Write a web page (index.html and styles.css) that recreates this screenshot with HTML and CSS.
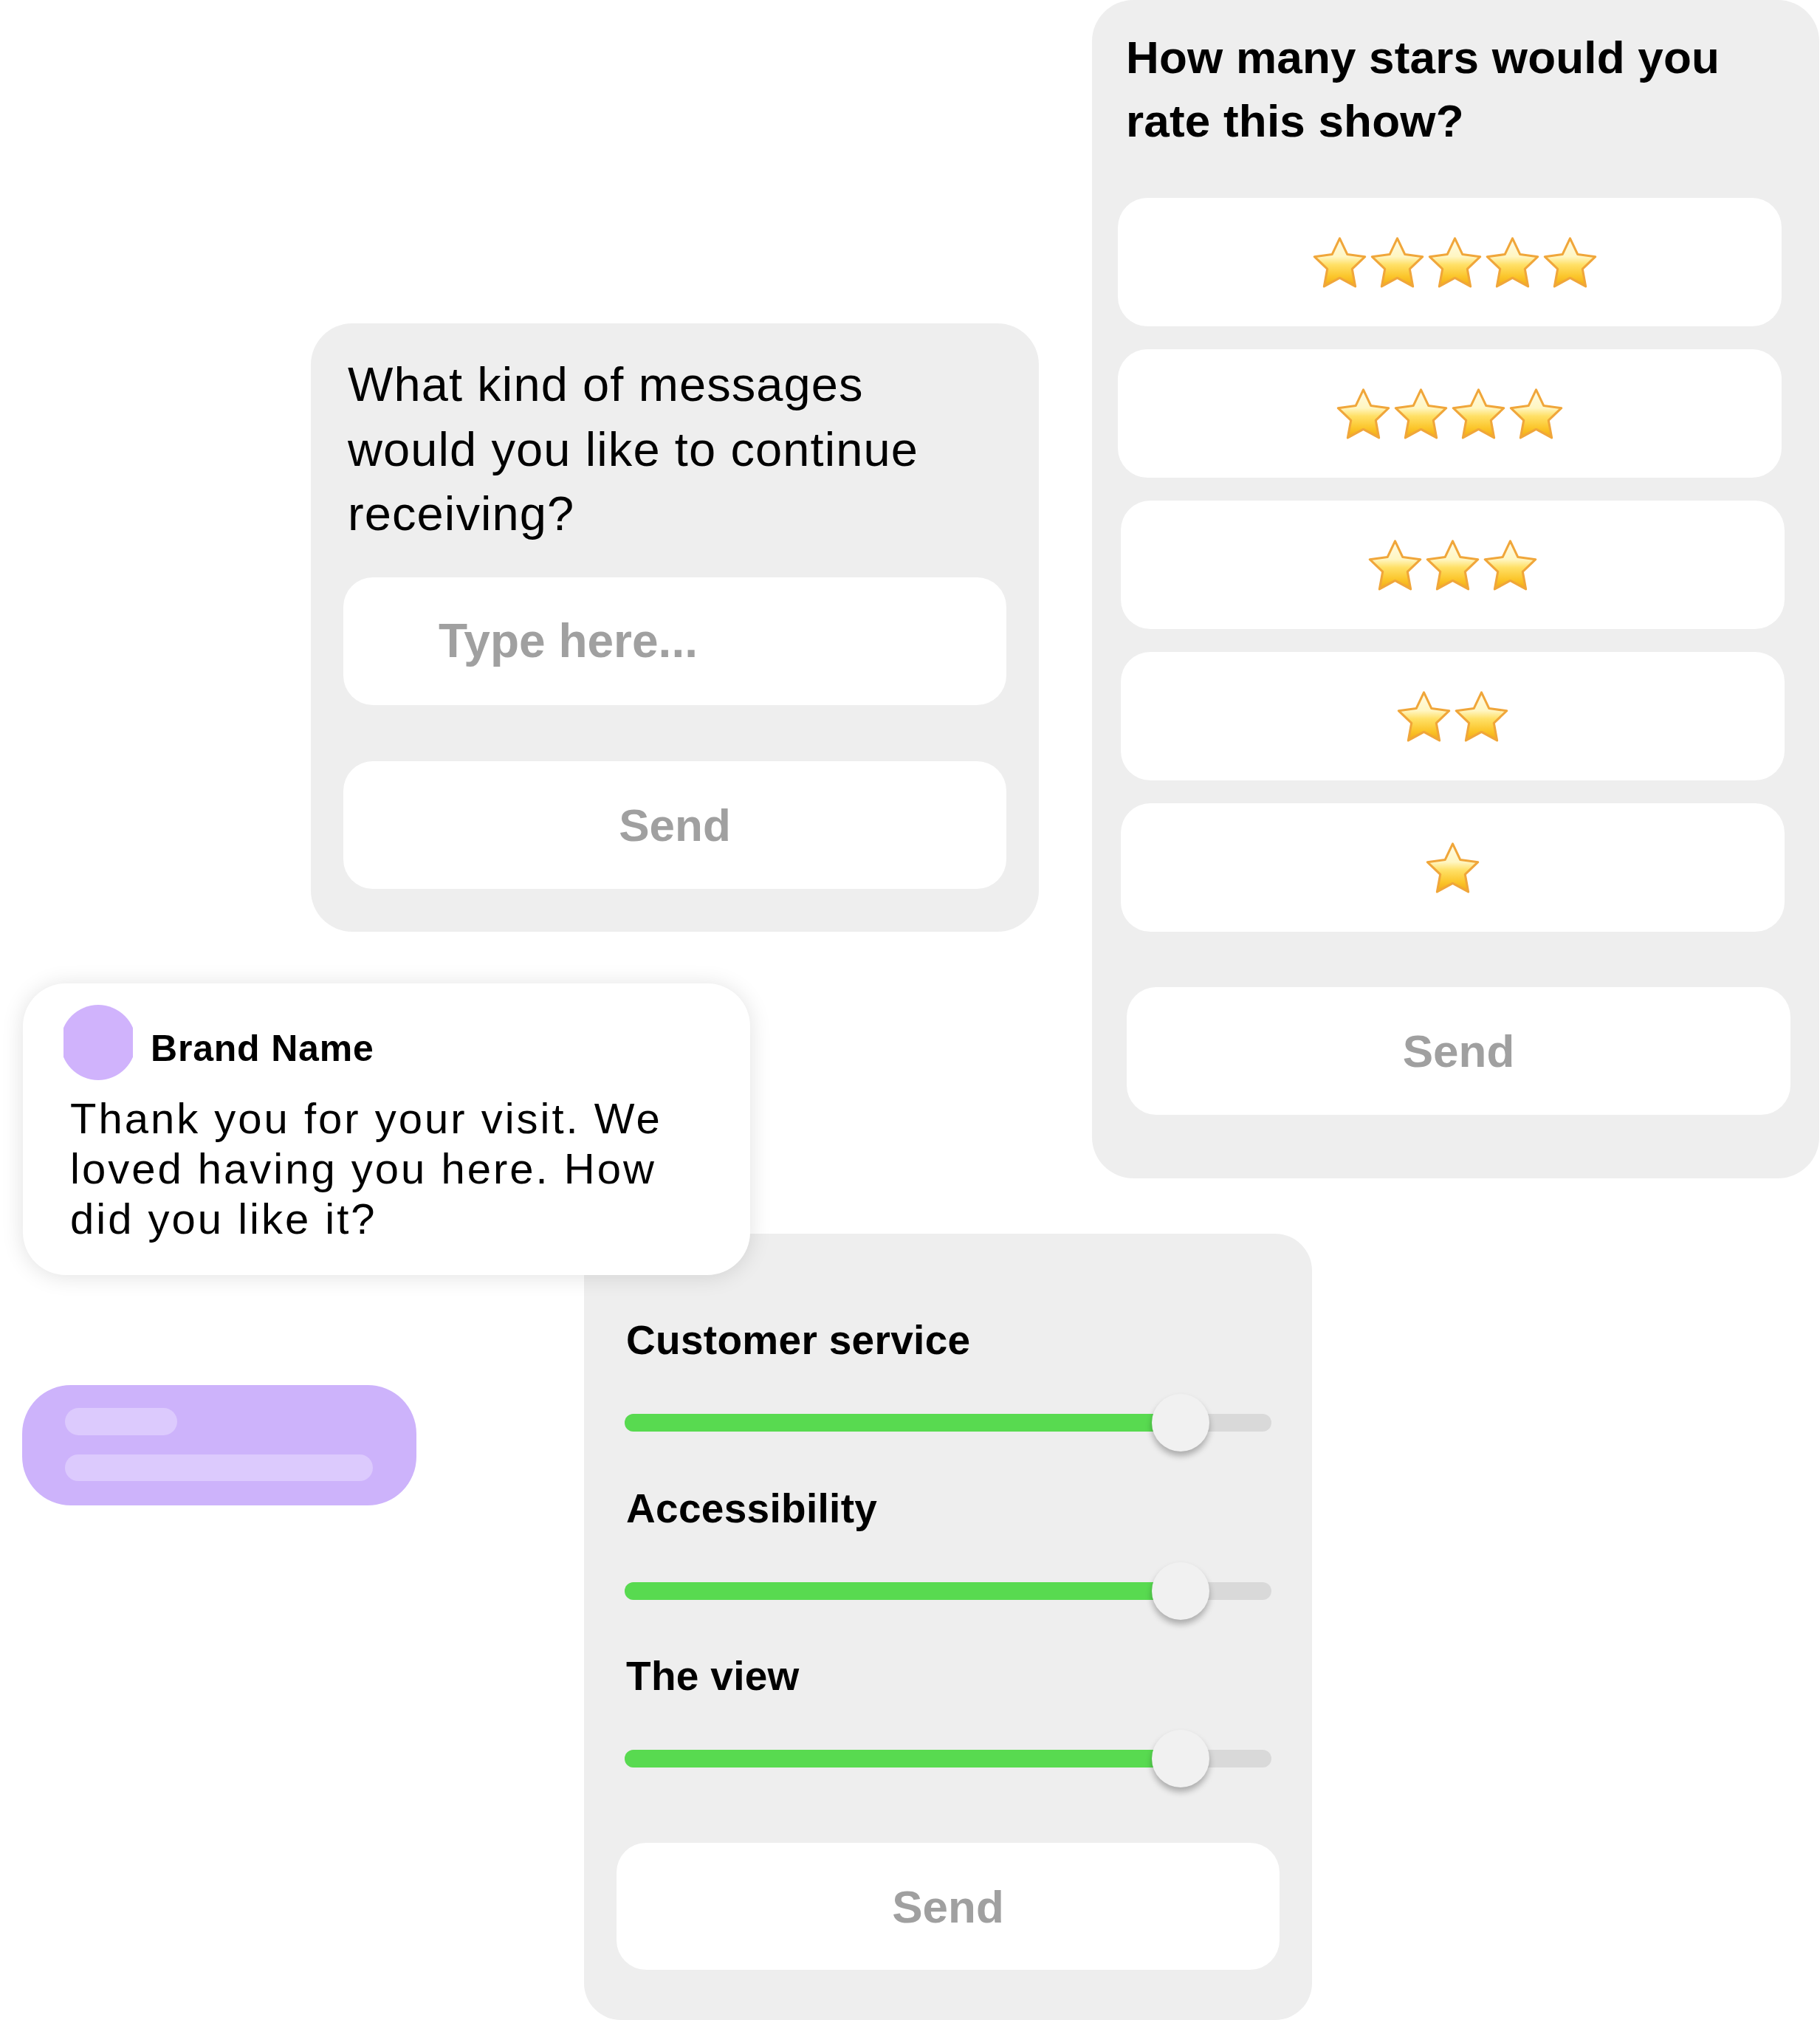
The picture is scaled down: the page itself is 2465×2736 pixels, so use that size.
FILE: index.html
```html
<!DOCTYPE html>
<html lang="en">
<head>
<meta charset="utf-8">
<title>Feedback cards</title>
<link rel="stylesheet" href="styles.css">
</head>
<body>
<svg class="defs" aria-hidden="true">
  <defs>
    <linearGradient id="starFill" x1="0" y1="0" x2="0" y2="1">
      <stop offset="0" stop-color="#fffbe6"/>
      <stop offset="0.38" stop-color="#fff6c2"/>
      <stop offset="0.55" stop-color="#ffe066"/>
      <stop offset="0.8" stop-color="#fbc52a"/>
      <stop offset="1" stop-color="#f2a915"/>
    </linearGradient>
    <symbol id="star" viewBox="0 0 100 94">
      <path d="M50 5 L63.5 33.4 L94.7 37.5 L71.9 59.1 L77.6 90 L50 75 L22.4 90 L28.1 59.1 L5.3 37.5 L36.5 33.4 Z" fill="url(#starFill)" stroke="#f0a63a" stroke-width="4" stroke-linejoin="round"/>
    </symbol>
  </defs>
</svg>
<div class="canvas">
  <section class="card stars-card">
    <h2 class="stars-title">How many stars would you<br>rate this show?</h2>
    <div class="rating-list">
      <div class="option first">
        <svg class="star"><use href="#star"/></svg><svg class="star"><use href="#star"/></svg><svg class="star"><use href="#star"/></svg><svg class="star"><use href="#star"/></svg><svg class="star"><use href="#star"/></svg>
      </div>
      <div class="option">
        <svg class="star"><use href="#star"/></svg><svg class="star"><use href="#star"/></svg><svg class="star"><use href="#star"/></svg><svg class="star"><use href="#star"/></svg>
      </div>
      <div class="option shifted">
        <svg class="star"><use href="#star"/></svg><svg class="star"><use href="#star"/></svg><svg class="star"><use href="#star"/></svg>
      </div>
      <div class="option shifted">
        <svg class="star"><use href="#star"/></svg><svg class="star"><use href="#star"/></svg>
      </div>
      <div class="option shifted">
        <svg class="star"><use href="#star"/></svg>
      </div>
    </div>
    <div class="send stars-send">Send</div>
  </section>

  <section class="card msg-card">
    <h2 class="msg-title">What kind of messages<br>would you like to continue<br>receiving?</h2>
    <div class="input">Type here...</div>
    <div class="send msg-send">Send</div>
  </section>

  <section class="card slider-card">
    <div class="groups">
      <div class="group">
        <div class="label">Customer service</div>
        <div class="slider"><div class="track"><div class="fill" style="width: 86%"><span class="thumb"></span></div></div></div>
      </div>
      <div class="group">
        <div class="label">Accessibility</div>
        <div class="slider"><div class="track"><div class="fill" style="width: 86%"><span class="thumb"></span></div></div></div>
      </div>
      <div class="group">
        <div class="label">The view</div>
        <div class="slider"><div class="track"><div class="fill" style="width: 86%"><span class="thumb"></span></div></div></div>
      </div>
    </div>
    <div class="send slider-send">Send</div>
  </section>

  <article class="brand-card">
    <div class="brand-head">
      <div class="avatar"></div>
      <div class="brand-name">Brand Name</div>
    </div>
    <p class="brand-msg">Thank you for your visit. We<br>loved having you here. How<br>did you like it?</p>
  </article>

  <div class="pill">
    <div class="bar bar-short"></div>
    <div class="bar bar-long"></div>
  </div>
</div>
</body>
</html>
```

FILE: styles.css
```css
html, body {
  margin: 0;
  padding: 0;
  background: #ffffff;
}

body {
  font-family: "Liberation Sans", Arial, sans-serif;
  color: #000;
}

.defs {
  position: absolute;
  width: 0;
  height: 0;
  overflow: hidden;
}

.canvas {
  position: relative;
  width: 2465px;
  height: 2736px;
  overflow: hidden;
}

.card {
  position: absolute;
  box-sizing: border-box;
  background: #eeeeee;
}

/* ---------- Stars card ---------- */
.stars-card {
  left: 1479px;
  top: 0;
  width: 985px;
  height: 1596px;
  border-radius: 56px;
  padding: 35px 0 0 35px;
}

.stars-title {
  margin: 0 0 0 11px;
  font-size: 62px;
  line-height: 86px;
  font-weight: 700;
  letter-spacing: 0.2px;
}

.rating-list {
  display: flex;
  flex-direction: column;
  gap: 31px;
  margin-top: 61px;
}

.option {
  width: 899px;
  height: 174px;
  box-sizing: border-box;
  background: #ffffff;
  border-radius: 40px;
  display: flex;
  align-items: center;
  justify-content: center;
  gap: 1px;
}

.option.first {
  padding-left: 14px;
}

.option.shifted {
  margin-left: 4px;
}

.star {
  width: 77px;
  height: 72px;
  flex: none;
}

.send {
  width: 899px;
  height: 173px;
  box-sizing: border-box;
  background: #ffffff;
  border-radius: 40px;
  display: flex;
  align-items: center;
  justify-content: center;
  font-size: 62px;
  font-weight: 700;
  color: #a0a0a0;
}

.stars-send {
  margin: 75px 0 0 12px;
}

/* ---------- Messages card ---------- */
.msg-card {
  left: 421px;
  top: 438px;
  width: 986px;
  height: 824px;
  border-radius: 56px;
  padding: 39px 0 0 44px;
}

.msg-title {
  margin: 0 0 0 6px;
  font-size: 65px;
  font-weight: 400;
  line-height: 87.5px;
  letter-spacing: 1.1px;
}

.input {
  margin-top: 42px;
  width: 898px;
  height: 173px;
  box-sizing: border-box;
  padding-left: 129px;
  background: #ffffff;
  border-radius: 40px;
  display: flex;
  align-items: center;
  font-size: 64px;
  font-weight: 700;
  color: #a0a0a0;
}

.msg-send {
  margin-top: 76px;
  width: 898px;
}

/* ---------- Slider card ---------- */
.slider-card {
  left: 791px;
  top: 1671px;
  width: 986px;
  height: 1065px;
  border-radius: 50px;
  padding: 111px 0 0 44px;
}

.groups {
  display: flex;
  flex-direction: column;
  gap: 43.5px;
}

.group {
  display: flex;
  flex-direction: column;
  gap: 40px;
}

.label {
  margin-left: 13px;
  font-size: 55px;
  line-height: 66px;
  font-weight: 700;
  letter-spacing: 0.3px;
}

.slider {
  margin-left: 11px;
  height: 78px;
  display: flex;
  align-items: center;
}

.track {
  width: 876px;
  height: 24px;
  border-radius: 12px;
  background: #d9d9d9;
}

.fill {
  position: relative;
  height: 24px;
  border-radius: 12px;
  background: #58da50;
}

.thumb {
  position: absolute;
  right: -39px;
  top: -27px;
  width: 78px;
  height: 78px;
  border-radius: 50%;
  background: #f1f1f1;
  box-shadow: 0 6px 9px rgba(0, 0, 0, 0.28);
}

.slider-send {
  margin-top: 75px;
  width: 898px;
  height: 172px;
}

/* ---------- Brand message card ---------- */
.brand-card {
  position: absolute;
  left: 31px;
  top: 1332px;
  width: 985px;
  height: 395px;
  box-sizing: border-box;
  padding: 29px 0 0 55px;
  background: #ffffff;
  border-radius: 58px;
  box-shadow: 0 2px 30px rgba(0, 0, 0, 0.12);
}

.brand-head {
  display: flex;
  align-items: center;
  gap: 24px;
}

.avatar {
  width: 94px;
  height: 102px;
  overflow: hidden;
  display: flex;
  justify-content: center;
  flex: none;
}

.avatar::before {
  content: "";
  flex: none;
  width: 102px;
  height: 102px;
  border-radius: 50%;
  background: #d0b3fc;
}

.brand-name {
  padding-top: 16px;
  font-size: 50px;
  font-weight: 700;
  letter-spacing: 0.8px;
}

.brand-msg {
  margin: 18px 0 0 9px;
  font-size: 58px;
  line-height: 68px;
  letter-spacing: 3px;
}

/* ---------- Purple pill ---------- */
.pill {
  position: absolute;
  left: 30px;
  top: 1876px;
  width: 534px;
  height: 163px;
  box-sizing: border-box;
  padding: 31px 0 0 58px;
  border-radius: 66px;
  background: #cdb3fb;
  display: flex;
  flex-direction: column;
  gap: 26px;
}

.bar {
  border-radius: 19px;
  background: #dccafd;
}

.bar-short {
  width: 152px;
  height: 37px;
}

.bar-long {
  width: 417px;
  height: 36px;
}
```
